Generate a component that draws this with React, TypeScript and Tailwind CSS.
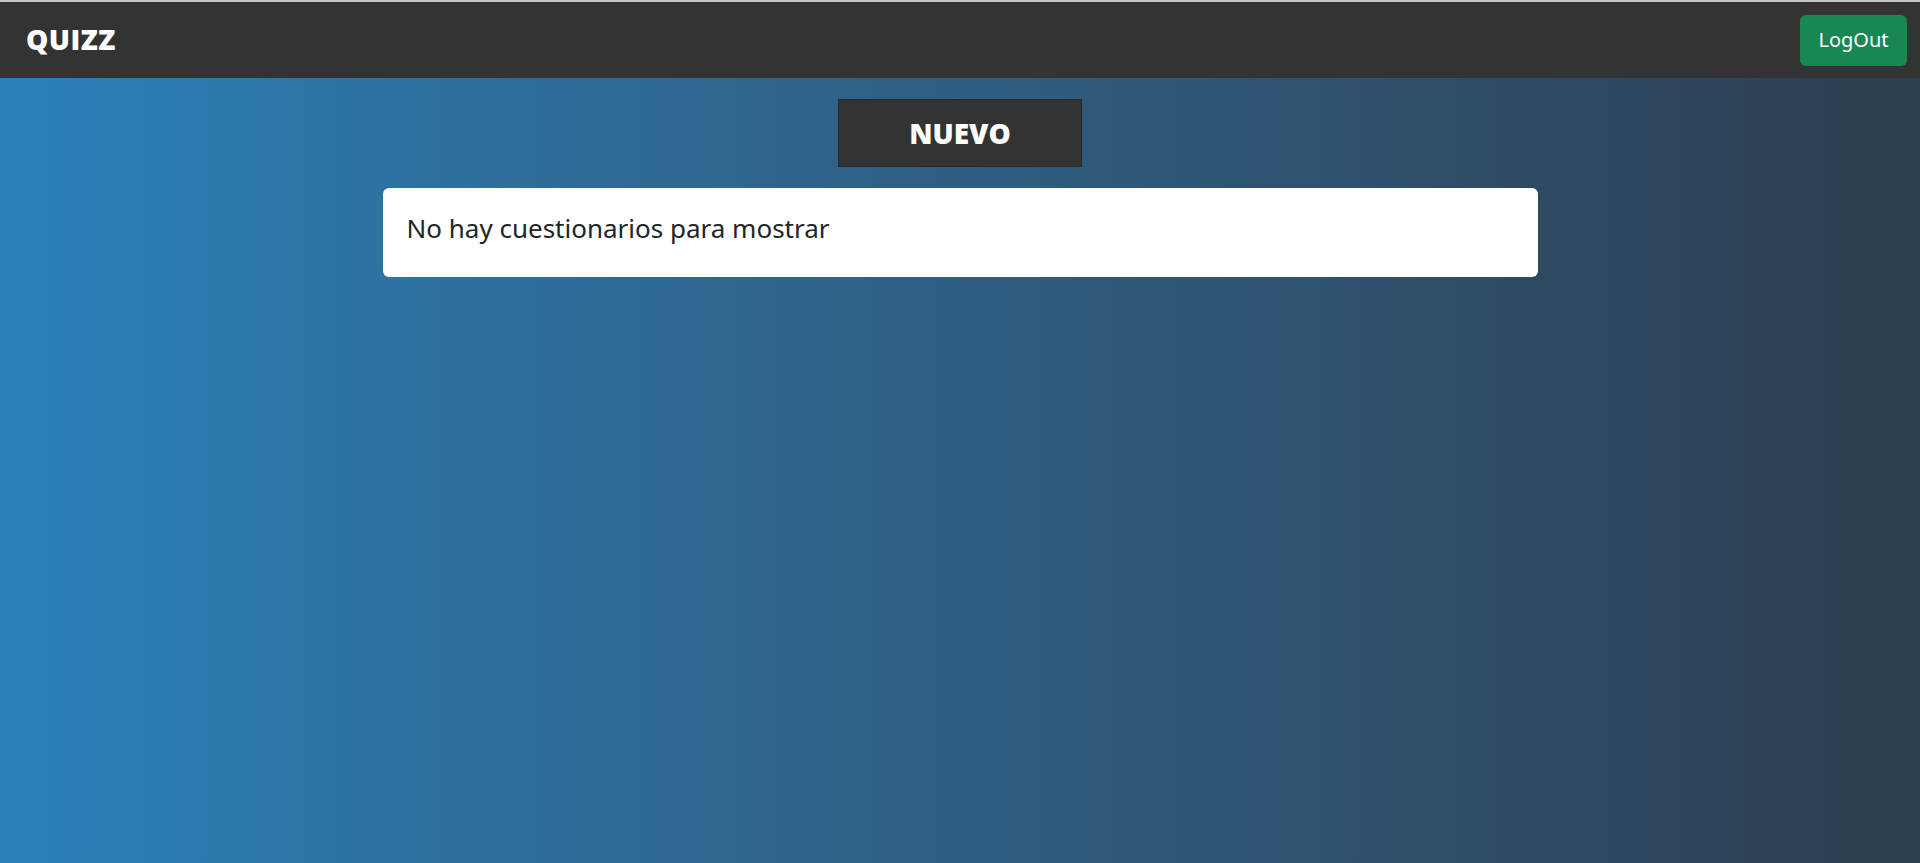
const App: React.FC = () => {
  return (
    <div className="min-h-screen flex flex-col bg-gradient-to-r from-[#2980b9] to-[#2c3e50] border-t-2 border-[#c4c4c4]">
      {/* Barra superior */}
      <nav className="h-[76px] bg-[#333333] flex items-center justify-between pl-[26px] pr-[13px]">
        <span className="text-white text-[28px] font-extrabold tracking-[0.5px] font-['Open_Sans',sans-serif] mt-[-2px]">
          QUIZZ
        </span>
        <button className="h-[51px] w-[107px] rounded-md bg-[#198754] text-white text-[20px] font-['Noto_Sans',sans-serif]">
          LogOut
        </button>
      </nav>

      <div className="flex flex-col items-center pt-[21px]">
        <button className="w-[244px] h-[68px] bg-[#333333] border border-[#2a2a2a] text-white text-[28px] font-extrabold font-['Open_Sans',sans-serif]">
          NUEVO
        </button>

        {/* Lista de cuestionarios */}
        <div className="mt-[21px] w-[1155px] h-[89px] bg-white rounded-md flex items-center px-6 pb-2">
          <span className="text-[#212529] text-[26px] font-['Noto_Sans',sans-serif]">
            No hay cuestionarios para mostrar
          </span>
        </div>
      </div>
    </div>
  );
};

export default App;
